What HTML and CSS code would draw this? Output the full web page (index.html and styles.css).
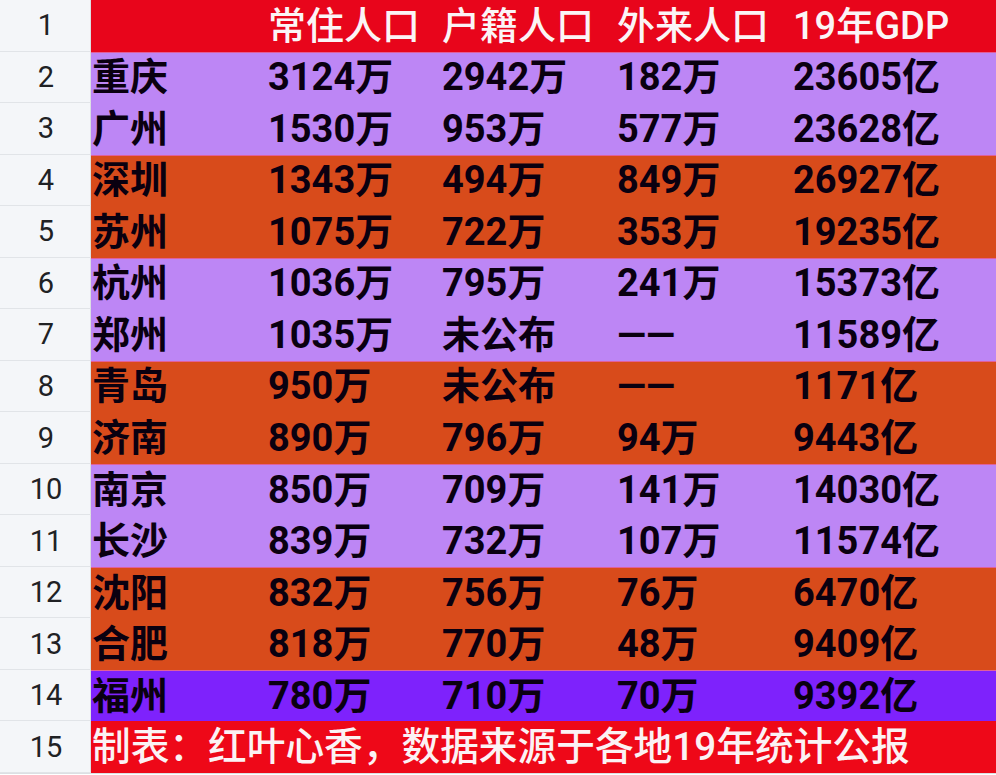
FILE: index.html
```html
<!DOCTYPE html>
<html lang="zh">
<head>
<meta charset="utf-8">
<title>城市人口与GDP</title>
<link rel="stylesheet" href="styles.css">
</head>
<body>
<div class="sheet">
  <div class="row head">
    <div class="num">1</div>
    <div class="cell"></div>
    <div class="cell">常住人口</div>
    <div class="cell">户籍人口</div>
    <div class="cell">外来人口</div>
    <div class="cell">19年GDP</div>
  </div>
  <div class="row lilac edge">
    <div class="num">2</div>
    <div class="cell">重庆</div><div class="cell">3124万</div><div class="cell">2942万</div><div class="cell">182万</div><div class="cell">23605亿</div>
  </div>
  <div class="row lilac">
    <div class="num">3</div>
    <div class="cell">广州</div><div class="cell">1530万</div><div class="cell">953万</div><div class="cell">577万</div><div class="cell">23628亿</div>
  </div>
  <div class="row orange edge">
    <div class="num">4</div>
    <div class="cell">深圳</div><div class="cell">1343万</div><div class="cell">494万</div><div class="cell">849万</div><div class="cell">26927亿</div>
  </div>
  <div class="row orange">
    <div class="num">5</div>
    <div class="cell">苏州</div><div class="cell">1075万</div><div class="cell">722万</div><div class="cell">353万</div><div class="cell">19235亿</div>
  </div>
  <div class="row lilac edge">
    <div class="num">6</div>
    <div class="cell">杭州</div><div class="cell">1036万</div><div class="cell">795万</div><div class="cell">241万</div><div class="cell">15373亿</div>
  </div>
  <div class="row lilac">
    <div class="num">7</div>
    <div class="cell">郑州</div><div class="cell">1035万</div><div class="cell">未公布</div><div class="cell">——</div><div class="cell">11589亿</div>
  </div>
  <div class="row orange edge">
    <div class="num">8</div>
    <div class="cell">青岛</div><div class="cell">950万</div><div class="cell">未公布</div><div class="cell">——</div><div class="cell">1171亿</div>
  </div>
  <div class="row orange">
    <div class="num">9</div>
    <div class="cell">济南</div><div class="cell">890万</div><div class="cell">796万</div><div class="cell">94万</div><div class="cell">9443亿</div>
  </div>
  <div class="row lilac edge">
    <div class="num">10</div>
    <div class="cell">南京</div><div class="cell">850万</div><div class="cell">709万</div><div class="cell">141万</div><div class="cell">14030亿</div>
  </div>
  <div class="row lilac">
    <div class="num">11</div>
    <div class="cell">长沙</div><div class="cell">839万</div><div class="cell">732万</div><div class="cell">107万</div><div class="cell">11574亿</div>
  </div>
  <div class="row orange edge">
    <div class="num">12</div>
    <div class="cell">沈阳</div><div class="cell">832万</div><div class="cell">756万</div><div class="cell">76万</div><div class="cell">6470亿</div>
  </div>
  <div class="row orange">
    <div class="num">13</div>
    <div class="cell">合肥</div><div class="cell">818万</div><div class="cell">770万</div><div class="cell">48万</div><div class="cell">9409亿</div>
  </div>
  <div class="row violet edge">
    <div class="num">14</div>
    <div class="cell">福州</div><div class="cell">780万</div><div class="cell">710万</div><div class="cell">70万</div><div class="cell">9392亿</div>
  </div>
  <div class="row foot">
    <div class="num">15</div>
    <div class="cell wide">制表：红叶心香，数据来源于各地19年统计公报</div>
  </div>
</div>
</body>
</html>
```

FILE: styles.css
```css
* { box-sizing: border-box; }
html, body { margin: 0; padding: 0; background: #ffffff; }
body { width: 996px; height: 775px; overflow: hidden; }

.sheet {
  display: flex;
  flex-direction: column;
  width: 996px;
  height: 774px;
  border-bottom: 1px solid #dcdfe3;
}

.row {
  flex: 1 1 0;
  display: grid;
  grid-template-columns: 91px 176px 174px 175px 176px 1fr;
  font-family: Roboto, "Noto Sans CJK SC", sans-serif;
  font-size: 38px;
  font-weight: 700;
  color: #0a0010;
}

.num {
  display: flex;
  align-items: center;
  justify-content: center;
  background: #f4f6f9;
  border-right: 1px solid #dcdfe3;
  border-bottom: 1px solid #e1e4e8;
  font-family: Roboto, "Noto Sans", sans-serif;
  font-weight: 400;
  font-size: 29px;
  color: #202124;
  padding-left: 2px;
}

.cell {
  display: flex;
  align-items: center;
  padding-left: 1px;
  white-space: nowrap;
  line-height: 1;
}

.head .cell { background: #e8051b; color: #fbf4f6; font-weight: 500; }
.lilac .cell { background: #bd86f5; }
.orange .cell { background: #d84b1b; }
.violet .cell { background: #7e22fc; }
.foot .cell { background: #ee0818; color: #fbf2f4; font-weight: 500; font-size: 38.7px; }

.edge .cell { box-shadow: inset 0 1px 0 #e0609a; }

.wide { grid-column: 2 / -1; }
```
